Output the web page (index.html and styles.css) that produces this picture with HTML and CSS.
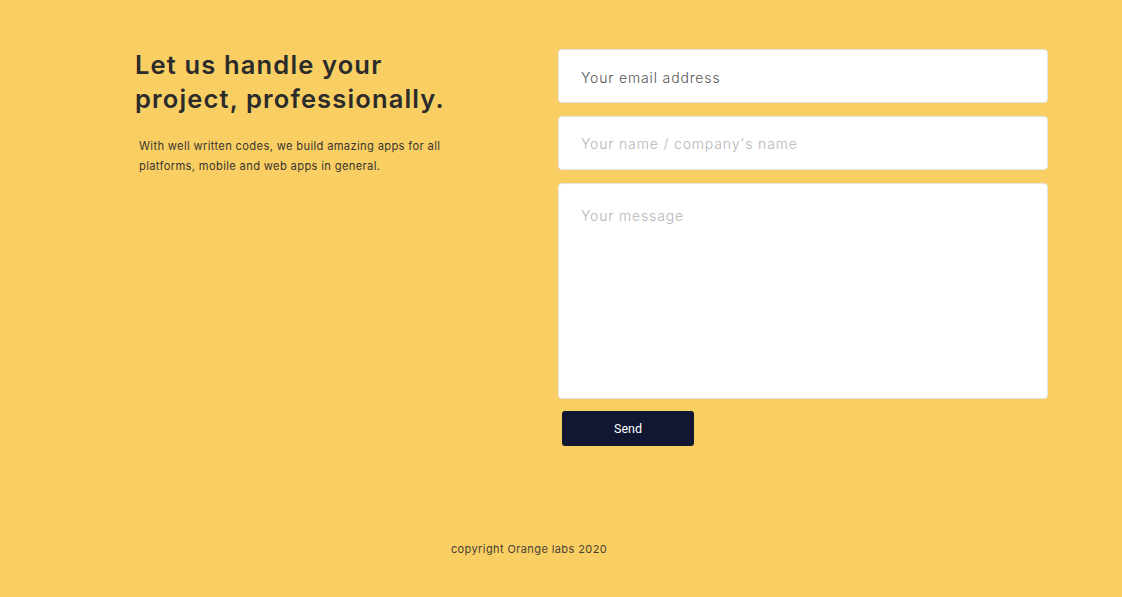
FILE: index.html
```html
<!DOCTYPE html>
<html lang="en">
<head>
<meta charset="utf-8">
<title>Contact</title>
<link rel="stylesheet" href="styles.css">
</head>
<body>
<main class="page">
  <section class="contact">
    <div class="intro">
      <h1 class="title">Let us handle your<br>project, professionally.</h1>
      <p class="lead">With well written codes, we build amazing apps for all platforms, mobile and web apps in general.</p>
    </div>
    <form class="form">
      <input class="field field-strong" type="email" placeholder="Your email address">
      <input class="field" type="text" placeholder="Your name / company's name">
      <textarea class="field area" placeholder="Your message"></textarea>
      <div class="actions"><button type="button" class="send">Send</button></div>
    </form>
  </section>
  <footer class="footer">copyright Orange labs 2020</footer>
</main>
</body>
</html>
```
FILE: styles.css
```css
* { box-sizing: border-box; }
html, body { margin: 0; height: 100%; }
body {
  background: #f9cf63;
  font-family: Inter, "Noto Sans", sans-serif;
  color: #2b2a28;
}
.page {
  min-height: 100%;
  display: flex;
  flex-direction: column;
}
.contact {
  display: flex;
  justify-content: space-between;
  padding: 46px 74px 0 135px;
}
.intro { width: 360px; }
.title {
  margin: 2px 0 0;
  font-size: 25.5px;
  line-height: 33.5px;
  font-weight: 600;
  color: #2b2b2b;
  letter-spacing: 1.15px;
}
.lead {
  margin: 22px 0 0 4px;
  width: 340px;
  font-size: 11.2px;
  line-height: 19.5px;
  color: #3a3530;
  letter-spacing: 0.33px;
}
.form {
  width: 490px;
  margin-top: 3px;
  display: flex;
  flex-direction: column;
  gap: 13px;
}
.field {
  display: block;
  width: 100%;
  height: 54px;
  border: 1px solid #e4e4e4;
  border-radius: 4px;
  background: #fff;
  padding: 0 22px;
  font-family: inherit;
  font-size: 14px;
  font-weight: 300;
  letter-spacing: 0.85px;
  color: #555;
  outline: none;
}
.field-strong { padding-top: 3px; }
.field::placeholder { color: #b5b5b5; }
.field-strong::placeholder { color: #555; }
.area {
  height: 216px;
  padding-top: 23px;
  resize: none;
}
.actions { padding-left: 4px; margin-top: -1px; }
.send {
  width: 132px;
  height: 35px;
  border: 0;
  border-radius: 3px;
  background: #111631;
  color: #fff;
  font-family: Roboto, sans-serif;
  font-size: 12.5px;
}
.footer {
  margin-top: 96px;
  padding-right: 64px;
  text-align: center;
  font-size: 11px;
  letter-spacing: 0.4px;
  color: #4a4136;
}
```
